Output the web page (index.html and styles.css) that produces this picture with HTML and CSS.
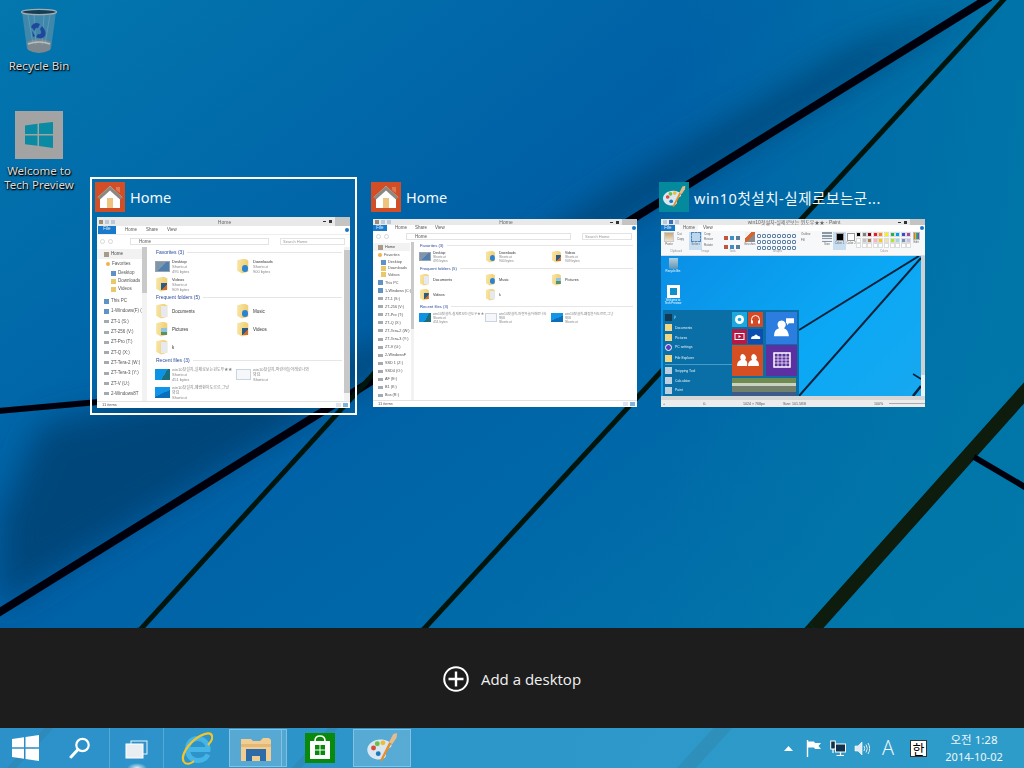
FILE: index.html
```html
<!DOCTYPE html>
<html lang="ko">
<head>
<meta charset="utf-8">
<title>Task View</title>
<link rel="stylesheet" href="styles.css">
</head>
<body>
<svg class="wallpaper" viewBox="0 0 1024 768" aria-hidden="true">
  <defs>
    <linearGradient id="wp" x1="0" y1="0" x2="1" y2="1">
      <stop offset="0" stop-color="#0377ae"/>
      <stop offset=".38" stop-color="#0060a6"/>
      <stop offset=".62" stop-color="#0069a8"/>
      <stop offset="1" stop-color="#0580ac"/>
    </linearGradient>
    <linearGradient id="right" x1="0" y1="0" x2="1" y2="0">
      <stop offset=".65" stop-color="#0078a8" stop-opacity="0"/>
      <stop offset="1" stop-color="#0078a8" stop-opacity=".8"/>
    </linearGradient>
    <filter id="soft" x="-20%" y="-20%" width="140%" height="140%"><feGaussianBlur stdDeviation="16"/></filter>
    <filter id="soft2"><feGaussianBlur stdDeviation=".6"/></filter>
  </defs>
  <rect width="1024" height="768" fill="url(#wp)"/>
  <rect width="1024" height="768" fill="url(#right)"/>
  <polygon points="0,520 40,425 380,345 620,185 850,50 985,0 640,212 0,607" fill="#00406f" opacity=".8" filter="url(#soft)"/>
  <g filter="url(#soft2)">
    <line x1="-5" y1="615" x2="990" y2="-3" stroke="#01060c" stroke-width="8"/>
    <line x1="423" y1="630" x2="1006" y2="-3" stroke="#04140f" stroke-width="5"/>
    <line x1="140" y1="630" x2="450" y2="290" stroke="#04140f" stroke-width="5"/>
    <line x1="-3" y1="411" x2="210" y2="392" stroke="#01060c" stroke-width="6"/>
    <line x1="814" y1="628" x2="1040" y2="375" stroke="#071a0a" stroke-width="14"/>
    <line x1="974" y1="457" x2="1030" y2="490" stroke="#01060c" stroke-width="6"/>
    <line x1="423" y1="630" x2="290" y2="775" stroke="#04140f" stroke-width="7"/>
    <line x1="140" y1="630" x2="5" y2="775" stroke="#04140f" stroke-width="7"/>
    <line x1="814" y1="628" x2="680" y2="775" stroke="#071a0a" stroke-width="14"/>
  </g>
</svg>

<main class="screen">
  <section class="desktop">
    <div class="icons">
      <div class="desk-icon desk-icon-bin">
        <svg class="bin" viewBox="0 0 38 46">
          <path d="M2 4 L7 41 Q19 48 31 41 L36 4 Z" fill="#7d9aa9" fill-opacity=".55"/>
          <path d="M7 34 Q19 28 31 34 L30 42 Q19 48 8 42 Z" fill="#8b8b8b"/>
          <path d="M8 36 Q19 32 30 36" stroke="#c8c8c8" stroke-width="1.5" fill="none"/>
          <path d="M8 7 L13 36 M14 7 L16 37 M24 7 L22 37 M30 7 L25 36" stroke="#a9c0cc" stroke-width=".7" opacity=".5"/>
          <path d="M11 19 Q14 13 20 16 L18 20 Q15 19 15 23 Z M22 18 Q27 24 25 28 Q22 32 16 29 L18 26 Q23 27 20 21 Z M12 23 L15 28 L13 29 Z" fill="#23439a"/>
          <ellipse cx="19" cy="4" rx="17.5" ry="2.6" fill="#17384a" stroke="#b4b4b4" stroke-width="1.3"/>
        </svg>
        <span class="desk-label">Recycle Bin</span>
      </div>
      <div class="desk-icon desk-icon-welcome">
        <div class="welcome-tile">
          <svg class="welcome-logo" viewBox="0 0 28 26">
            <path d="M0 3.5 L12.5 1.8 V12 H0 Z M14 1.6 L28 0 V12 H14 Z M0 13.5 H12.5 V23.8 L0 22.2 Z M14 13.5 H28 V26 L14 24 Z" fill="#0b8aa3"/>
          </svg>
        </div>
        <span class="desk-label">Welcome to<br>Tech Preview</span>
      </div>
    </div>

    <div class="cards">
      <!-- Card 1 -->
      <article class="card card-selected">
        <header class="card-head">
          <span class="app-tile tile-home">
            <svg viewBox="0 0 30 30" class="app-svg">
              <path d="M21 5 H25 V11 L21 8 Z" fill="#dc7a55"/>
              <path d="M15 4 L27.5 15.5 L25 15.5 V26 H5 V15.5 H2.5 Z" fill="#fff"/>
              <path d="M15 4 L27.5 15.5 L25 17.5 L15 8.5 L5 17.5 L2.5 15.5 Z" fill="#8c8781"/>
              <rect x="12" y="16" width="6" height="10" fill="#eec27f"/>
            </svg>
          </span>
          <span class="card-title">Home</span>
        </header>
        <div class="thumb win win-a">
          <div class="win-title"><span class="qa"><i class="qa-home"></i><i class="qa-doc"></i><i class="qa-doc"></i></span><span class="win-name">Home</span><span class="caps"><i class="cap-min"></i><i class="cap-max"></i><b class="cap-close"></b></span></div>
          <div class="win-tabs"><span class="tab-file">File</span><span>Home</span><span>Share</span><span>View</span><em class="help"></em></div>
          <div class="win-addr"><i class="round"></i><i class="round"></i><span class="addr-box">Home</span><span class="search-box">Search Home</span></div>
          <div class="win-body">
            <nav class="nav">
              <span class="nav-item nav-sel"><i class="mini mini-home"></i>Home</span>
              <span class="nav-item nav-fav"><i class="mini mini-star"></i>Favorites</span>
              <span class="nav-item nav-in"><i class="mini mini-blue"></i>Desktop</span>
              <span class="nav-item nav-in"><i class="mini mini-yellow"></i>Downloads</span>
              <span class="nav-item nav-in"><i class="mini mini-yellow"></i>Videos</span>
              <span class="nav-item nav-gap"><i class="mini mini-blue"></i>This PC</span>
              <span class="nav-item"><i class="mini mini-blue"></i>1-Windows(F) (C:)</span>
              <span class="nav-item"><i class="mini"></i>ZT-1 (S:)</span>
              <span class="nav-item"><i class="mini"></i>ZT-256 (V:)</span>
              <span class="nav-item"><i class="mini"></i>ZT-Pro (T:)</span>
              <span class="nav-item"><i class="mini"></i>ZT-Q (X:)</span>
              <span class="nav-item"><i class="mini"></i>ZT-Tera-2 (W:)</span>
              <span class="nav-item"><i class="mini"></i>ZT-Tera-3 (Y:)</span>
              <span class="nav-item"><i class="mini"></i>ZT-V (U:)</span>
              <span class="nav-item"><i class="mini"></i>2-Windows8T</span>
              <span class="nav-scroll"></span>
            </nav>
            <div class="main">
              <h4 class="grp">Favorites (3)</h4>
              <div class="files">
                <div class="file"><i class="ico ico-desk"></i><p><b>Desktop</b><br>Shortcut<br>495 bytes</p></div>
                <div class="file"><i class="ico ico-folder ico-dl"></i><p><b>Downloads</b><br>Shortcut<br>900 bytes</p></div>
                <div class="file"><i class="ico ico-folder ico-vid"></i><p><b>Videos</b><br>Shortcut<br>909 bytes</p></div>
              </div>
              <h4 class="grp">Frequent folders (5)</h4>
              <div class="files">
                <div class="file file-one"><i class="ico ico-folder ico-doc"></i><p>Documents</p></div>
                <div class="file file-one"><i class="ico ico-folder ico-dl"></i><p>Music</p></div>
                <div class="file file-one"><i class="ico ico-folder ico-pic"></i><p>Pictures</p></div>
                <div class="file file-one"><i class="ico ico-folder ico-vid"></i><p>Videos</p></div>
                <div class="file file-one"><i class="ico ico-folder ico-doc"></i><p>k</p></div>
              </div>
              <h4 class="grp">Recent files (3)</h4>
              <div class="files">
                <div class="file"><i class="ico ico-shot"></i><p>win10첫설치-실제로보는윈도우★★<br>Shortcut<br>451 bytes</p></div>
                <div class="file"><i class="ico ico-shot2"></i><p>win10첫설치-파란하늘아래로나와<br>봐요<br>Shortcut</p></div>
                <div class="file"><i class="ico ico-shot3"></i><p>win10첫설치-폐렴환자도르르,그냥<br>봐요<br>Shortcut</p></div>
              </div>
              <span class="main-scroll"></span>
            </div>
          </div>
          <div class="win-status"><span>11 items</span><em class="views"><i></i><i class="view-on"></i></em></div>
        </div>
      </article>

      <!-- Card 2 -->
      <article class="card card-wide">
        <header class="card-head">
          <span class="app-tile tile-home">
            <svg viewBox="0 0 30 30" class="app-svg">
              <path d="M21 5 H25 V11 L21 8 Z" fill="#dc7a55"/>
              <path d="M15 4 L27.5 15.5 L25 15.5 V26 H5 V15.5 H2.5 Z" fill="#fff"/>
              <path d="M15 4 L27.5 15.5 L25 17.5 L15 8.5 L5 17.5 L2.5 15.5 Z" fill="#8c8781"/>
              <rect x="12" y="16" width="6" height="10" fill="#eec27f"/>
            </svg>
          </span>
          <span class="card-title">Home</span>
        </header>
        <div class="thumb win win-b">
          <div class="win-title"><span class="qa"><i class="qa-home"></i><i class="qa-doc"></i><i class="qa-doc"></i></span><span class="win-name">Home</span><span class="caps"><i class="cap-min"></i><i class="cap-max"></i><b class="cap-close"></b></span></div>
          <div class="win-tabs"><span class="tab-file">File</span><span>Home</span><span>Share</span><span>View</span><em class="help"></em></div>
          <div class="win-addr"><i class="round"></i><i class="round"></i><span class="addr-box">Home</span><span class="search-box">Search Home</span></div>
          <div class="win-body">
            <nav class="nav">
              <span class="nav-item nav-sel"><i class="mini mini-home"></i>Home</span>
              <span class="nav-item nav-fav"><i class="mini mini-star"></i>Favorites</span>
              <span class="nav-item nav-in"><i class="mini mini-blue"></i>Desktop</span>
              <span class="nav-item nav-in"><i class="mini mini-yellow"></i>Downloads</span>
              <span class="nav-item nav-in"><i class="mini mini-yellow"></i>Videos</span>
              <span class="nav-item nav-gap"><i class="mini mini-blue"></i>This PC</span>
              <span class="nav-item"><i class="mini mini-blue"></i>1-Windows (C:)</span>
              <span class="nav-item"><i class="mini"></i>ZT-1 (S:)</span>
              <span class="nav-item"><i class="mini"></i>ZT-256 (V:)</span>
              <span class="nav-item"><i class="mini"></i>ZT-Pro (T:)</span>
              <span class="nav-item"><i class="mini"></i>ZT-Q (X:)</span>
              <span class="nav-item"><i class="mini"></i>ZT-Tera-2 (W:)</span>
              <span class="nav-item"><i class="mini"></i>ZT-Tera-3 (Y:)</span>
              <span class="nav-item"><i class="mini"></i>ZT-V (U:)</span>
              <span class="nav-item"><i class="mini"></i>2-WindowsF</span>
              <span class="nav-item"><i class="mini"></i>SSD 1 (Z:)</span>
              <span class="nav-item"><i class="mini"></i>SSD4 (O:)</span>
              <span class="nav-item"><i class="mini"></i>AF (E:)</span>
              <span class="nav-item"><i class="mini"></i>B1 (K:)</span>
              <span class="nav-item"><i class="mini"></i>Bas (R:)</span>
              <span class="nav-scroll"></span>
            </nav>
            <div class="main">
              <h4 class="grp">Favorites (3)</h4>
              <div class="files">
                <div class="file"><i class="ico ico-desk"></i><p><b>Desktop</b><br>Shortcut<br>495 bytes</p></div>
                <div class="file"><i class="ico ico-folder ico-dl"></i><p><b>Downloads</b><br>Shortcut<br>900 bytes</p></div>
                <div class="file"><i class="ico ico-folder ico-vid"></i><p><b>Videos</b><br>Shortcut<br>909 bytes</p></div>
              </div>
              <h4 class="grp">Frequent folders (5)</h4>
              <div class="files">
                <div class="file file-one"><i class="ico ico-folder ico-doc"></i><p>Documents</p></div>
                <div class="file file-one"><i class="ico ico-folder ico-dl"></i><p>Music</p></div>
                <div class="file file-one"><i class="ico ico-folder ico-pic"></i><p>Pictures</p></div>
                <div class="file file-one"><i class="ico ico-folder ico-vid"></i><p>Videos</p></div>
                <div class="file file-one"><i class="ico ico-folder ico-doc"></i><p>k</p></div>
              </div>
              <h4 class="grp">Recent files (3)</h4>
              <div class="files">
                <div class="file"><i class="ico ico-shot"></i><p>win10첫설치-실제로보는윈도우★★<br>Shortcut<br>451 bytes</p></div>
                <div class="file"><i class="ico ico-shot2"></i><p>win10첫설치-파란하늘아래로나와<br>봐요<br>Shortcut</p></div>
                <div class="file"><i class="ico ico-shot3"></i><p>win10첫설치-폐렴환자도르르,그냥<br>봐요<br>Shortcut</p></div>
              </div>
            </div>
          </div>
          <div class="win-status"><span>11 items</span><em class="views"><i></i><i class="view-on"></i></em></div>
        </div>
      </article>

      <!-- Card 3 -->
      <article class="card card-wide">
        <header class="card-head">
          <span class="app-tile tile-paint">
            <svg viewBox="0 0 34 34" class="app-svg">
              <use href="#palette"/>
            </svg>
          </span>
          <span class="card-title card-title-long">win10첫설치-실제로보는군...</span>
        </header>
        <div class="thumb win win-p">
          <div class="win-title"><span class="qa"><i class="qa-doc"></i><i class="qa-save"></i><i class="qa-doc"></i></span><span class="win-name">win10첫설치-실제로보는 윈도우★★ - Paint</span><span class="caps"><i class="cap-min"></i><i class="cap-max"></i><b class="cap-close"></b></span></div>
          <div class="win-tabs"><span class="tab-file">File</span><span class="tab-cur">Home</span><span>View</span><em class="help"></em></div>
          <div class="ribbon">
            <div class="ribbon-row">
              <div class="rb rb-paste"><i class="rb-big rb-clip"></i><span>Paste</span></div>
              <div class="rb rb-cut"><span>Cut</span><span>Copy</span></div>
              <div class="rb rb-select"><i class="rb-big rb-sel"></i><span>Select</span></div>
              <div class="rb rb-img"><span>Crop</span><span>Resize</span><span>Rotate</span></div>
              <div class="rb rb-tools"><i></i><i></i><i></i><i></i><i></i><i></i></div>
              <div class="rb rb-brush"><i class="rb-big rb-brushes"></i><span>Brushes</span></div>
              <div class="rb rb-shapes"><i></i><i></i><i></i><i></i><i></i><i></i><i></i><i></i><i></i><i></i><i></i><i></i><i></i><i></i><i></i><i></i><i></i><i></i><i></i><i></i><i></i><i></i><i></i><i></i></div>
              <div class="rb rb-outline"><span>Outline</span><span>Fill</span></div>
              <div class="rb rb-size"><i class="rb-big rb-lines"></i><span>Size</span></div>
              <div class="rb rb-color1"><i class="swatch-big swatch-black"></i><span>Color 1</span></div>
              <div class="rb rb-color2"><i class="swatch-big"></i><span>Color 2</span></div>
              <div class="palette">
                <i class="c01"></i><i class="c02"></i><i class="c03"></i><i class="c04"></i><i class="c05"></i><i class="c06"></i><i class="c07"></i><i class="c08"></i><i class="c09"></i><i class="c10"></i>
                <i class="c11"></i><i class="c12"></i><i class="c13"></i><i class="c14"></i><i class="c15"></i><i class="c16"></i><i class="c17"></i><i class="c18"></i><i class="c19"></i><i class="c20"></i>
                <i></i><i></i><i></i><i></i><i></i><i></i><i></i><i></i><i></i><i></i>
              </div>
              <div class="rb rb-edit"><i class="rb-small rb-rainbow"></i><span>Edit</span></div>
            </div>
            <div class="ribbon-groups">
              <span class="g-clip">Clipboard</span><span class="g-image">Image</span><span class="g-tools">Tools</span><span class="g-shapes">Shapes</span><span class="g-colors">Colors</span>
            </div>
          </div>
          <div class="paint-area">
            <div class="canvas">
              <svg class="canvas-lines" viewBox="0 0 260 140" preserveAspectRatio="none">
                <line x1="138" y1="74" x2="258" y2="0" stroke="#04213a" stroke-width="2"/>
                <line x1="138" y1="140" x2="260" y2="2" stroke="#04213a" stroke-width="2"/>
                <line x1="252" y1="118" x2="260" y2="123" stroke="#04213a" stroke-width="1.5"/>
                <line x1="252" y1="140" x2="260" y2="130" stroke="#04213a" stroke-width="2.5"/>
              </svg>
              <div class="mini-desk mini-desk-bin"><i class="mini-bin"></i><span>Recycle Bin</span></div>
              <div class="mini-desk"><i class="mini-welcome"></i><span>Welcome to<br>Tech Preview</span></div>
              <div class="startmenu">
                <div class="sm-left">
                  <span class="sm-user"><i class="sm-ico sm-ico-dark"></i>ji</span>
                  <span class="sm-row"><i class="sm-ico sm-ico-fold"></i>Documents</span>
                  <span class="sm-row"><i class="sm-ico sm-ico-fold"></i>Pictures</span>
                  <span class="sm-row"><i class="sm-ico sm-ico-gear"></i>PC settings</span>
                  <span class="sm-row sm-row-div"><i class="sm-ico sm-ico-fold"></i>File Explorer</span>
                  <span class="sm-row"><i class="sm-ico sm-ico-grey"></i>Snipping Tool</span>
                  <span class="sm-row"><i class="sm-ico sm-ico-grey"></i>Calculator</span>
                  <span class="sm-row"><i class="sm-ico sm-ico-grey"></i>Paint</span>
                </div>
                <div class="sm-tiles">
                  <i class="t t-skype"><svg viewBox="0 0 15 15" class="t-svg"><circle cx="7.5" cy="7.5" r="4.5" fill="#fff"/><circle cx="7.5" cy="7.5" r="1.8" fill="#1ba8dc"/></svg></i>
                  <i class="t t-music"><svg viewBox="0 0 15 15" class="t-svg"><path d="M3.5 9 V7.5 A4 4 0 0 1 11.5 7.5 V9" fill="none" stroke="#fff"/><rect x="3" y="8.5" width="2" height="3" fill="#fff"/><rect x="10" y="8.5" width="2" height="3" fill="#fff"/></svg></i>
                  <i class="t t-feed"><svg viewBox="0 0 31 31" class="t-svg"><path d="M8 24 Q8 17 13 16 Q10 12 13 9 Q17 7 19 10 Q21 13 18 16 Q22 17 23 24 Z M20 6 H28 V11 H23 L21 13 V11 H20 Z" fill="#fff"/></svg></i>
                  <i class="t t-video"><svg viewBox="0 0 15 15" class="t-svg"><rect x="3" y="4.5" width="9" height="6" fill="none" stroke="#fff"/><path d="M6.5 6 L9 7.5 L6.5 9 Z" fill="#fff"/></svg></i>
                  <i class="t t-cloud"><svg viewBox="0 0 15 15" class="t-svg"><path d="M3 10 Q3 7 6 7 Q8 4 10 7 Q13 7 12 10 Z" fill="#fff"/></svg></i>
                  <i class="t t-people"><svg viewBox="0 0 31 31" class="t-svg"><path d="M5 21 Q5 16 9 15 Q7 11 10 9 Q13 9 14 13 L13 15 Q16 16 15 21 Z M16 21 Q16 16 20 15 Q18 11 21 9 Q24 9 25 13 L24 15 Q27 16 27 21 Z" fill="#fff"/></svg></i>
                  <i class="t t-cal"><svg viewBox="0 0 31 31" class="t-svg"><rect x="8" y="8" width="16" height="14" fill="none" stroke="#fff" stroke-width="1.5"/><path d="M8 12 H24 M8 15 H24 M8 18 H24 M12 8 V22 M16 8 V22 M20 8 V22" stroke="#fff" stroke-width=".7"/></svg></i>
                  <i class="t t-photo"></i>
                </div>
              </div>
            </div>
            <span class="paint-vscroll"></span>
          </div>
          <div class="paint-hscroll"></div>
          <div class="paint-status"><span>+</span><span>⧉</span><span>1024 × 768px</span><span>Size: 101.5KB</span><span>100%</span><i class="zoom-slider"></i></div>
        </div>
      </article>
    </div>
  </section>

  <section class="add-panel">
    <svg class="add-icon" viewBox="0 0 26 26">
      <circle cx="13" cy="13" r="11.8" fill="none" stroke="#fff" stroke-width="2"/>
      <path d="M13 5.5 V20.5 M5.5 13 H20.5" stroke="#fff" stroke-width="2.4"/>
    </svg>
    <span class="add-text">Add a desktop</span>
  </section>

  <footer class="taskbar">
    <div class="tb-slot tb-start">
      <svg class="tb-winlogo" viewBox="0 0 27 26">
        <path d="M0 4 L12 2.2 V12.2 H0 Z M13.5 2 L27 0 V12.2 H13.5 Z M0 13.8 H12 V23.8 L0 22 Z M13.5 13.8 H27 V26 L13.5 24 Z" fill="#fff"/>
      </svg>
    </div>
    <div class="tb-slot tb-search">
      <svg class="tb-mag" viewBox="0 0 22 22">
        <circle cx="13.5" cy="8" r="6.2" fill="none" stroke="#fff" stroke-width="2.2"/>
        <path d="M9 12.5 L2 20" stroke="#fff" stroke-width="3" stroke-linecap="round"/>
      </svg>
    </div>
    <div class="tb-slot tb-view">
      <svg class="tb-views" viewBox="0 0 23 19">
        <rect x="6" y="1" width="16" height="13" fill="none" stroke="#fff" stroke-width="1" opacity=".9"/>
        <rect x="1" y="4" width="17" height="14" fill="#e9eef2" stroke="#fff"/>
      </svg>
      <i class="tb-glow"></i>
    </div>
    <div class="tb-slot tb-ie">
      <svg class="tb-svg-ie" viewBox="0 0 32 34">
        <path d="M8 18.5 H27 C27.5 11 21 7.5 16.5 7.5 C10.5 7.5 6.5 12.5 6.5 18.5 C6.5 25 11 29.5 17 29.5 C21.5 29.5 25 27.5 27 23.5" fill="none" stroke="#45b5e8" stroke-width="5"/>
        <path d="M3 31 C-1 25 7 12 19 5 C25 2 30 1 31 5 C32 8 29 12 27 14" fill="none" stroke="#f3c52b" stroke-width="2.2"/>
        <path d="M3 31 C5 34 10 33 13 30" fill="none" stroke="#f3c52b" stroke-width="2"/>
      </svg>
    </div>
    <div class="tb-btn tb-btn-explorer">
      <svg class="tb-svg-folder" viewBox="0 0 30 25">
        <path d="M0 3 H10 L12 5 H19 L22 2 H28 L30 4 V25 H0 Z" fill="#f1cd91"/>
        <path d="M0 8 H30 V11 H0 Z" fill="#e4b877"/>
        <path d="M5 25 V13 H25 V25 Z" fill="#2e6ca8"/>
        <rect x="11" y="20" width="8" height="5" fill="#f1cd91"/>
      </svg>
    </div>
    <i class="tb-stack"></i>
    <div class="tb-slot tb-store">
      <span class="store-tile">
        <svg viewBox="0 0 30 30" class="app-svg">
          <path d="M10 8 Q10 3 15 3 Q20 3 20 8" fill="none" stroke="#fff" stroke-width="1.6"/>
          <path d="M5 8 H25 V26 H5 Z" fill="#fff"/>
          <path d="M10 12 H14.5 V16.5 H10 Z M15.5 12 H20 V16.5 H15.5 Z M10 17.5 H14.5 V22 H10 Z M15.5 17.5 H20 V22 H15.5 Z" fill="#0a8a0a"/>
        </svg>
      </span>
    </div>
    <div class="tb-btn tb-btn-paint">
      <svg class="tb-svg-paint" viewBox="0 0 34 34"><use href="#palette"/></svg>
    </div>
    <div class="tray">
      <svg class="tray-up" viewBox="0 0 9 5"><path d="M0 5 L4.5 0 L9 5 Z" fill="#fff"/></svg>
      <svg class="tray-ico" viewBox="0 0 16 17">
        <path d="M1.5 0 V17" stroke="#fff" stroke-width="1.4"/>
        <path d="M2 1.5 H8 L9 3 H15 L12.5 6 L15 9 H9 L8 7.5 H2 Z" fill="#fff"/>
      </svg>
      <svg class="tray-ico" viewBox="0 0 16 17">
        <rect x=".7" y="1" width="4.6" height="8" fill="#11324a" stroke="#fff"/>
        <rect x="5.5" y="4" width="10" height="8" fill="#11324a" stroke="#fff"/>
        <path d="M3 9 V13 M10.5 12 V15 M6.5 15.5 H14" stroke="#fff" stroke-width="1.2"/>
      </svg>
      <svg class="tray-ico" viewBox="0 0 16 17">
        <path d="M1 6 H4 L8 2 V15 L4 11 H1 Z" fill="#dfe9ef" stroke="#fff" stroke-width=".6"/>
        <path d="M10 6 Q11.5 8.5 10 11 M12 4.5 Q14.6 8.5 12 12.5 M14 3 Q17.4 8.5 14 14" fill="none" stroke="#e6eef3" stroke-width="1"/>
      </svg>
      <span class="tray-a">A</span>
      <span class="tray-han">한</span>
      <div class="clock"><span class="clock-time">오전 1:28</span><span>2014-10-02</span></div>
    </div>
  </footer>
</main>

<svg class="defs-only" aria-hidden="true">
  <symbol id="palette" viewBox="0 0 34 34">
    <path d="M2 22 C-1 15 7 8 15 8 C22 8 28 11 27 15 C26 18 22 17 21 20 C20 24 23 26 19 28 C13 31 4 28 2 22 Z" fill="#d9e7f0"/>
    <circle cx="8" cy="17" r="2.6" fill="#d94a3a"/>
    <circle cx="12" cy="12.5" r="2.6" fill="#6abf4b"/>
    <circle cx="18" cy="11.5" r="2.6" fill="#eebb33"/>
    <circle cx="13" cy="23" r="2.6" fill="#1c78c0"/>
    <path d="M15 30 L25 10 L27.5 11.5 L17 31 Z" fill="#e98d2b"/>
    <path d="M24.5 11 L29 2 L33 1 L32.5 6 L28 12.8 Z" fill="#e5bd8b"/>
  </symbol>
</svg>
</body>
</html>
```
FILE: styles.css
```css
* { box-sizing: border-box; margin: 0; padding: 0; }
html, body { width: 1024px; height: 768px; overflow: hidden; background: #0065a8; }
body { font-family: "Open Sans", "Noto Sans CJK KR", sans-serif; color: #fff; position: relative; }

.wallpaper { position: absolute; left: 0; top: 0; width: 1024px; height: 768px; }
.defs-only { position: absolute; width: 0; height: 0; }

.screen { position: relative; width: 1024px; height: 768px; display: flex; flex-direction: column; }
.desktop { position: relative; height: 628px; flex: none; }

/* Desktop icons */
.icons { position: absolute; left: 0; top: 0; width: 78px; display: flex; flex-direction: column; align-items: center; }
.desk-icon { display: flex; flex-direction: column; align-items: center; }
.desk-icon-bin { margin-top: 8px; }
.desk-icon-welcome { margin-top: 38px; }
.bin { width: 38px; height: 46px; opacity: .9; }
.desk-label { font-family: "Noto Sans", sans-serif; font-size: 11.5px; line-height: 14px; margin-top: 5px; text-align: center; color: #dadada; text-shadow: 0 1px 2px #000, 1px 1px 1px #000; white-space: nowrap; }
.welcome-tile { width: 48px; height: 48px; background: #a3a3a3; display: flex; align-items: center; justify-content: center; }
.welcome-logo { width: 28px; height: 26px; }

/* Cards */
.cards { display: flex; gap: 9px; padding: 177px 0 0 90px; }
.card { width: 267px; height: 238px; border: 2px solid transparent; padding: 3px; }
.card-selected { border-color: #fff; }
.card-wide { width: 279px; }
.card-wide:last-child { width: 278px; }
.card-head { display: flex; align-items: center; gap: 5px; height: 30px; margin-bottom: 5px; }
.card-wide .card-head { margin-bottom: 7px; }
.app-tile { width: 30px; height: 30px; flex: none; display: block; }
.tile-home { background: #d24e27; }
.tile-paint { background: #05899c; padding: 3px; }
.app-svg { width: 100%; height: 100%; display: block; }
.card-title { font-family: "Noto Sans", "Noto Sans CJK KR", sans-serif; font-size: 14.5px; white-space: nowrap; color: #f4f8fb; }
.card-title-long { letter-spacing: .55px; }

/* Window thumbnails */
.thumb { background: #fff; color: #444; overflow: hidden; filter: blur(.5px); font-family: "Liberation Sans", "Noto Sans CJK KR", sans-serif; font-size: 5px; line-height: 6px; margin-left: 2px; }
.win { display: flex; flex-direction: column; }
.win-a { width: 253px; height: 191px; }
.win-b { width: 264px; height: 188px; }
.win-p { width: 264px; height: 188px; }

.win-title { height: 9px; background: #e9e9e9; display: flex; align-items: center; justify-content: space-between; padding-left: 2px; flex: none; }
.win-b .win-title, .win-p .win-title { height: 6px; }
.qa { display: flex; gap: 2px; width: 40px; }
.qa i { display: block; width: 4px; height: 4px; background: #bcc9d8; }
.qa .qa-home { background: #9a8d7a; }
.qa .qa-save { background: #3f6fb8; }
.win-name { color: #666; white-space: nowrap; }
.caps { display: flex; align-items: center; justify-content: flex-end; gap: 3px; width: 40px; height: 100%; }
.caps i { display: block; background: #333; }
.cap-min { width: 3px; height: 1px; }
.cap-max { width: 3px; height: 3px; }
.cap-close { display: block; width: 15px; height: 100%; background: #c4c4c4; }

.win-tabs { height: 9px; flex: none; display: flex; align-items: center; gap: 9px; color: #555; border-bottom: 1px solid #eee; font-size: 4.5px; }
.win-b .win-tabs, .win-p .win-tabs { height: 6px; gap: 8px; border: 0; }
.tab-file { width: 18px; height: 100%; background: #1979ca; color: #e8f2fa; text-align: center; margin-left: 1px; }
.win-b .tab-file, .win-p .tab-file { width: 14px; margin-left: 0; }
.tab-cur { background: #f6f6f6; padding: 0 3px; margin: 0 -3px; }
.help { display: block; width: 4px; height: 4px; border-radius: 50%; background: #1a74c2; margin: 0 1px 0 auto; }

.win-addr { height: 12px; flex: none; display: flex; align-items: center; gap: 3px; padding: 2px 5px 2px 3px; }
.win-b .win-addr { height: 11px; }
.round { display: block; width: 5px; height: 5px; border-radius: 50%; border: 1px solid #d8d8d8; }
.addr-box { flex: 1; height: 7px; margin-left: 14px; border: 1px solid #e3e3e3; padding-left: 8px; line-height: 5px; font-size: 4.5px; margin-right: 8px; color: #555; }
.search-box { width: 65px; height: 7px; border: 1px solid #e3e3e3; padding-left: 2px; line-height: 5px; font-size: 4px; color: #999; }
.win-b .search-box { width: 50px; }

.win-body { flex: 1; min-height: 0; display: flex; overflow: hidden; }
.nav { position: relative; width: 50px; flex: none; display: flex; flex-direction: column; overflow: hidden; padding-top: 2px; }
.nav-item { display: flex; align-items: center; gap: 2px; height: 10.3px; flex: none; padding-left: 7px; color: #555; white-space: nowrap; font-size: 4.5px; overflow: hidden; padding-right: 6px; }
.win-b .nav { width: 41px; padding-top: 1px; }
.win-b .nav-item { height: 8.05px; font-size: 3.8px; padding-left: 5px; padding-right: 4px; }
.nav-sel { background: #f2f2f2; margin-right: 4px; padding-left: 7px; color: #444; }
.nav-fav { padding-left: 9px; }
.nav-in { height: 7.8px; padding-left: 14px; }
.win-b .nav-in { height: 6.2px; padding-left: 8px; }
.nav-gap { margin-top: 3px; }
.win-b .nav-gap { margin-top: 1px; }
.mini { display: block; width: 5px; height: 3px; background: #a3aab0; flex: none; }
.mini-blue { background: #5f93c4; height: 5px; }
.mini-yellow { background: #e8c86a; height: 5px; }
.mini-home { background: #a89b8a; height: 5px; }
.mini-star { background: #f0b34a; width: 4px; height: 4px; border-radius: 50%; }
.nav-scroll { position: absolute; right: 0; top: 0; bottom: 0; width: 5px; background: linear-gradient(#c9c9c9 0 30%, #f2f2f2 30%); }
.win-b .nav-scroll { width: 3px; background: linear-gradient(#c9c9c9 0 55%, #f2f2f2 55%); }

.main { position: relative; flex: 1; min-width: 0; padding: 2px 8px 0 8px; overflow: hidden; }
.win-b .main { padding: 1px 4px 0 5px; }
.grp { font-weight: 400; font-size: 5px; line-height: 6px; color: #2a4a9a; margin: 0 0 2px; padding-left: 1px; display: flex; align-items: center; gap: 3px; white-space: nowrap; }
.grp::after { content: ""; flex: 1; height: 1px; background: #e6e6e6; }
.win-b .grp { font-size: 4.2px; line-height: 5px; margin-bottom: 1px; }
.files { display: grid; grid-template-columns: 81px 81px; margin-bottom: 1px; }
.win-b .files { grid-template-columns: 66px 66px 66px; margin-bottom: 2px; }
.file { display: flex; gap: 2px; height: 18px; align-items: center; overflow: hidden; font-size: 4px; line-height: 5px; color: #888; white-space: nowrap; }
.win-b .file { height: 15px; font-size: 3.4px; line-height: 4px; }
.file b { font-weight: 400; color: #333; }
.file-one p { color: #333; font-size: 4.5px; }
.win-b .file-one p { font-size: 3.8px; }
.ico { display: block; width: 15px; height: 15px; flex: none; position: relative; }
.win-b .ico { width: 12px; height: 12px; }
.ico-desk { background: linear-gradient(135deg, #7e95ab 0 50%, #4f7fae 50%); border: 1px solid #99a3ad; height: 11px; }
.win-b .ico-desk { height: 9px; }
.ico-folder { background: linear-gradient(100deg, #f9e9ae, #edc45c); clip-path: polygon(8% 12%, 58% 0, 82% 14%, 82% 88%, 40% 100%, 8% 82%); }
.ico-folder::after { content: ""; position: absolute; right: 18%; bottom: 12%; width: 44%; height: 48%; background: #d8e2ee; }
.ico-dl::after { background: #2b84d3; border-radius: 50%; }
.ico-vid::after { background: linear-gradient(135deg, #2c5b85 0 60%, #d26a2c 60%); }
.ico-doc::after { background: #e4e9f2; height: 70%; }
.ico-pic::after { background: linear-gradient(#8cc4e4 0 55%, #5b8f6a 55%); }
.ico-shot { height: 11px; background: linear-gradient(120deg, #0c93e4 0 60%, #1c6e7a 60%); }
.ico-shot2 { height: 11px; background: #f5f7fa; border: 1px solid #c8d4e0; }
.ico-shot3 { height: 11px; background: linear-gradient(155deg, #1095e8 0 55%, #0a6eb8 55%); }
.win-b .ico-shot, .win-b .ico-shot2, .win-b .ico-shot3 { height: 9px; }
.main-scroll { position: absolute; right: 0; top: 0; bottom: 0; width: 6px; background: linear-gradient(#f2f2f2 3px, #c8c8c8 3px 95%, #f2f2f2 95%); }

.win-status { height: 7px; flex: none; display: flex; align-items: center; justify-content: space-between; padding: 0 2px 0 5px; font-size: 4px; color: #555; border-top: 1px solid #e2e2e2; }
.views { display: flex; gap: 2px; }
.views i { display: block; width: 5px; height: 4px; background: #dfe5ea; }
.views .view-on { background: #7fb3d9; }

/* Paint thumbnail */
.ribbon { height: 25px; flex: none; display: flex; flex-direction: column; background: #f7f8f9; border-bottom: 1px solid #dcdcdc; font-size: 3px; line-height: 3.4px; color: #666; }
.ribbon-row { height: 19px; flex: none; display: flex; padding: 1px 0 0 2px; }
.ribbon-groups { flex: 1; display: flex; padding-left: 2px; font-size: 2.8px; color: #999; text-align: center; }
.g-clip { width: 26px; }
.g-image { width: 33px; }
.g-tools { width: 21px; }
.g-shapes { width: 41px; margin-left: 14px; }
.g-colors { width: 78px; margin-left: 47px; }
.rb { display: flex; flex-direction: column; align-items: center; gap: 1px; height: 18px; flex: none; }
.rb-paste { width: 12px; }
.rb-cut { width: 14px; align-items: flex-start; padding: 1px 0 0 2px; gap: 2px; }
.rb-select { width: 13px; background: #c9def1; }
.rb-img { width: 20px; align-items: flex-start; padding: 1px 0 0 2px; gap: 2px; }
.rb-tools { width: 21px; display: grid; grid-template-columns: repeat(3, 4px); gap: 2px; padding: 3px 0 0 2px; }
.rb-tools i { display: block; width: 4px; height: 4px; background: #c1553e; }
.rb-tools i:nth-child(3n) { background: #5b7c96; }
.rb-tools i:nth-child(3n+2) { background: #3f8fc4; }
.rb-brush { width: 14px; }
.rb-shapes { width: 41px; display: grid; grid-template-columns: repeat(8, 4px); gap: 1.5px 1px; padding: 2px 0 0 0; }
.rb-shapes i { display: block; width: 4px; height: 3.5px; border: .8px solid #5b7fa6; border-radius: 1px; }
.rb-outline { width: 23px; align-items: flex-start; gap: 3px; padding: 1px 0 0 3px; }
.rb-size { width: 12px; }
.rb-color1 { width: 13px; background: #c9def1; }
.rb-color2 { width: 10px; }
.rb-big { display: block; width: 10px; height: 10px; }
.rb-small { display: block; width: 7px; height: 8px; }
.rb-clip { background: linear-gradient(#c9a878, #efe6d2); border: 1px solid #ccc; }
.rb-sel { background: #bcd6ee; border: 1px dashed #4f87bd; }
.rb-brushes { background: linear-gradient(135deg, #f0f0f0 0 35%, #d7642f 35% 60%, #8a8a8a 60%); }
.rb-lines { height: 10px; background: repeating-linear-gradient(#8a97a5 0 1.5px, #eef1f4 1.5px 3px); }
.rb-rainbow { background: linear-gradient(90deg, #d93a3a, #ecc92a, #36b34a, #2f7fd6, #8e3fc2); border: 1px solid #bbb; }
.swatch-big { display: block; width: 8px; height: 8px; margin-top: 1px; background: #fff; border: 1px solid #999; }
.swatch-black { background: #000; }
.palette { display: grid; grid-template-columns: repeat(10, 5px); grid-auto-rows: 5px; gap: .6px; flex: none; width: 56px; }
.palette i { display: block; background: #fff; border: .5px solid #ddd; }
.palette .c01 { background: #000; } .palette .c02 { background: #7f7f7f; } .palette .c03 { background: #880015; } .palette .c04 { background: #ed1c24; } .palette .c05 { background: #ff7f27; }
.palette .c06 { background: #fff200; } .palette .c07 { background: #22b14c; } .palette .c08 { background: #00a2e8; } .palette .c09 { background: #3f48cc; } .palette .c10 { background: #a349a4; }
.palette .c11 { background: #fff; } .palette .c12 { background: #c3c3c3; } .palette .c13 { background: #b97a57; } .palette .c14 { background: #ffaec9; } .palette .c15 { background: #ffc90e; }
.palette .c16 { background: #efe4b0; } .palette .c17 { background: #b5e61d; } .palette .c18 { background: #99d9ea; } .palette .c19 { background: #7092be; } .palette .c20 { background: #c8bfe7; }
.rb-edit { width: 8px; }

.paint-area { flex: 1; min-height: 0; display: flex; }
.canvas { position: relative; flex: 1; min-width: 0; background: linear-gradient(135deg, #0a8fe6, #0ba8f5 60%, #17a8f0); overflow: hidden; display: flex; flex-direction: column; align-items: flex-start; padding: 2px 0 0 2px; }
.canvas-lines { position: absolute; left: 0; top: 0; width: 100%; height: 100%; }
.paint-vscroll { width: 4px; flex: none; background: linear-gradient(#d0d0d0 0 85%, #f0f0f0 85%); }
.paint-hscroll { height: 4px; flex: none; background: #d6d6d6; }
.paint-status { height: 7px; flex: none; display: grid; grid-template-columns: 40px 40px 40px 91px 12px 40px; align-items: center; padding-left: 2px; background: #ececec; font-size: 3.6px; color: #555; white-space: nowrap; }
.zoom-slider { display: block; height: 1px; background: #aaa; margin-left: 3px; }

.mini-desk { position: relative; width: 20px; display: flex; flex-direction: column; align-items: center; font-size: 2.8px; line-height: 3.2px; color: #fff; text-align: center; white-space: nowrap; }
.mini-desk-bin { margin-bottom: 12px; }
.mini-bin { display: block; width: 9px; height: 11px; background: linear-gradient(#b5cfdd, #5d94b5); border-radius: 0 0 2px 2px; margin-bottom: 1px; }
.mini-welcome { display: block; width: 13px; height: 13px; background: linear-gradient(#0e90c8, #0e90c8) center/7px 7px no-repeat #fff; margin-bottom: 1px; }

.startmenu { position: relative; width: 136px; height: 86px; margin-top: auto; display: flex; background: #0a6ea7; flex: none; }
.sm-left { width: 69px; flex: none; display: flex; flex-direction: column; font-size: 3.4px; color: #e4f2fa; padding: 1px 0 0 2px; }
.sm-user { height: 12px; display: flex; align-items: center; gap: 2px; flex: none; }
.sm-row { height: 9.7px; display: flex; align-items: center; gap: 3px; flex: none; white-space: nowrap; }
.sm-row-div { border-bottom: 1px solid #4a9cc8; height: 13px; margin-bottom: 1px; }
.sm-ico { display: block; width: 7px; height: 7px; background: #8fb8cf; flex: none; }
.sm-ico-dark { background: #123a55; }
.sm-ico-fold { background: #f0d583; }
.sm-ico-gear { background: #5a3bc0; border-radius: 50%; border: 1.5px solid #fff; }
.sm-ico-grey { background: #bcd0dd; }
.sm-tiles { display: grid; grid-template-columns: 15px 15px 31px; grid-template-rows: 15px 15px 31px 18px; gap: 1.5px 1px; padding-top: 2px; }
.t { display: block; min-width: 0; }
.t-svg { width: 100%; height: 100%; display: block; }
.t-skype { background: #1ba8dc; }
.t-music { background: #d44a26; }
.t-feed { grid-column: 3; grid-row: 1 / span 2; background: #2b7de0; margin-left: 2px; width: 31px; }
.t-video { background: #b51a47; }
.t-cloud { background: #0d4fae; }
.t-people { grid-column: 1 / span 2; background: #d64f23; }
.t-cal { background: #5c30a0; margin-left: 2px; width: 31px; }
.t-photo { grid-column: 1 / span 3; width: 64px; background: linear-gradient(#6e8c4f 0 30%, #c9d2c4 30% 45%, #73806a 45% 80%, #3e5a8a 80%); }

/* Add desktop panel */
.add-panel { height: 100px; flex: none; background: #1d1d1d; display: flex; align-items: center; justify-content: center; gap: 12px; padding-top: 2px; }
.add-icon { width: 26px; height: 26px; }
.add-text { font-family: "Open Sans", sans-serif; font-size: 15px; color: #f2f2f2; line-height: 26px; }

/* Taskbar */
.taskbar { height: 40px; flex: none; display: flex; align-items: stretch; background: linear-gradient(90deg, rgba(50,150,205,.9), rgba(50,160,205,.9)); position: relative; }
.tb-slot { display: flex; align-items: center; justify-content: center; position: relative; flex: none; }
.tb-start { width: 50px; }
.tb-search { width: 60px; }
.tb-view { width: 55px; border-left: 1px solid rgba(255,255,255,.2); margin-left: -1px; border-right: 1px solid rgba(255,255,255,.2); }
.tb-ie { width: 65px; }
.tb-store { width: 66px; }
.tb-winlogo { width: 27px; height: 26px; }
.tb-mag { width: 22px; height: 22px; }
.tb-views { width: 23px; height: 19px; margin-top: 3px; }
.tb-glow { position: absolute; left: 17px; bottom: 0; width: 20px; height: 5px; background: radial-gradient(ellipse at 50% 100%, rgba(255,255,255,.85), rgba(255,255,255,0) 70%); }
.tb-svg-ie { width: 32px; height: 34px; }
.tb-btn { display: flex; align-items: center; justify-content: center; flex: none; margin: 1px 0; background: rgba(255,255,255,.2); border: 1px solid rgba(255,255,255,.28); }
.tb-btn-explorer { width: 53px; }
.tb-stack { display: block; width: 5px; margin: 1px 0; flex: none; background: rgba(255,255,255,.18); border: 1px solid rgba(255,255,255,.28); border-left: 0; }
.tb-svg-folder { width: 30px; height: 25px; }
.store-tile { display: block; width: 30px; height: 30px; background: #0a8a0a; }
.tb-btn-paint { width: 58px; }
.tb-svg-paint { width: 32px; height: 32px; }

.tray { flex: 1; display: flex; align-items: center; padding-left: 373px; position: relative; }
.tray-up { width: 9px; height: 5px; flex: none; margin-top: 1px; }
.tray-ico { width: 16px; height: 17px; flex: none; margin-left: 8px; }
.tray-up + .tray-ico { margin-left: 13px; }
.tray-a { font-family: "Open Sans", sans-serif; font-size: 20px; line-height: 24px; margin-left: 12px; color: #f4f8fb; font-weight: 300; }
.tray-han { display: block; width: 17px; height: 17px; margin-left: 16px; background: #fff; color: #000; font-family: "Noto Sans CJK KR", sans-serif; font-size: 13px; line-height: 15px; text-align: center; border: 1px solid #333; }
.clock { width: 90px; margin-left: 2px; display: flex; flex-direction: column; align-items: center; font-family: "Noto Sans", "Noto Sans CJK KR", sans-serif; font-size: 11px; line-height: 17px; color: #eef5f9; }
.clock-time { font-size: 11.5px; }
```
